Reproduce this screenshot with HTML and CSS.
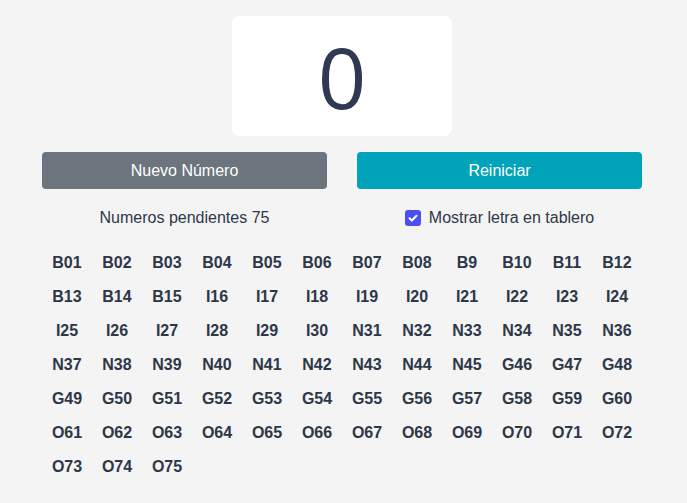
FILE: index.html
```html
<!DOCTYPE html>
<html lang="es">
<head>
<meta charset="utf-8">
<title>Bingo</title>
<link rel="stylesheet" href="styles.css">
</head>
<body>
<div class="app">
  <div class="display"><span class="current">0</span></div>
  <div class="controls">
    <div class="col">
      <button class="btn btn-gray">Nuevo Número</button>
      <div class="info">Numeros pendientes 75</div>
    </div>
    <div class="col">
      <button class="btn btn-teal">Reiniciar</button>
      <label class="info check">
        <span class="box"><svg viewBox="0 0 16 16" width="16" height="16"><path d="M4.5 8.2l2.3 2.3 4.7-4.8" fill="none" stroke="#fff" stroke-width="2" stroke-linecap="round" stroke-linejoin="round"/></svg></span>
        Mostrar letra en tablero
      </label>
    </div>
  </div>
  <div class="board">
    <span>B01</span><span>B02</span><span>B03</span><span>B04</span><span>B05</span><span>B06</span><span>B07</span><span>B08</span><span>B9</span><span>B10</span><span>B11</span><span>B12</span>
    <span>B13</span><span>B14</span><span>B15</span><span>I16</span><span>I17</span><span>I18</span><span>I19</span><span>I20</span><span>I21</span><span>I22</span><span>I23</span><span>I24</span>
    <span>I25</span><span>I26</span><span>I27</span><span>I28</span><span>I29</span><span>I30</span><span>N31</span><span>N32</span><span>N33</span><span>N34</span><span>N35</span><span>N36</span>
    <span>N37</span><span>N38</span><span>N39</span><span>N40</span><span>N41</span><span>N42</span><span>N43</span><span>N44</span><span>N45</span><span>G46</span><span>G47</span><span>G48</span>
    <span>G49</span><span>G50</span><span>G51</span><span>G52</span><span>G53</span><span>G54</span><span>G55</span><span>G56</span><span>G57</span><span>G58</span><span>G59</span><span>G60</span>
    <span>O61</span><span>O62</span><span>O63</span><span>O64</span><span>O65</span><span>O66</span><span>O67</span><span>O68</span><span>O69</span><span>O70</span><span>O71</span><span>O72</span>
    <span>O73</span><span>O74</span><span>O75</span>
  </div>
</div>
</body>
</html>
```
FILE: styles.css
```css
html, body {
  margin: 0;
  padding: 0;
  background: #f4f4f4;
}
body {
  font-family: "Liberation Sans", Arial, sans-serif;
  color: #2d3748;
  padding-right: 3px;
}
.app {
  width: 600px;
  margin: 0 auto;
  padding-top: 16px;
}
.display {
  width: 220px;
  height: 120px;
  margin: 0 auto;
  background: #fff;
  border-radius: 8px;
  display: flex;
  align-items: center;
  justify-content: center;
}
.current {
  font-family: "Open Sans", sans-serif;
  font-size: 85px;
  line-height: 1;
  color: #2d3a52;
}
.controls {
  margin-top: 16px;
  display: grid;
  grid-template-columns: 1fr 1fr;
  column-gap: 30px;
}
.col {
  display: flex;
  flex-direction: column;
  align-items: center;
}
.btn {
  width: 100%;
  height: 37px;
  border: none;
  border-radius: 4px;
  color: #fff;
  font-family: "Liberation Sans", Arial, sans-serif;
  font-size: 16px;
  padding: 0;
}
.btn-gray { background: #6c757d; }
.btn-teal { background: #00a3b9; }
.info {
  margin-top: 17px;
  font-size: 16px;
  line-height: 24px;
  display: flex;
  align-items: center;
}
.box {
  width: 16px;
  height: 16px;
  border-radius: 3px;
  background: #4b4ff0;
  display: inline-flex;
  margin-right: 8px;
}
.board {
  margin-top: 16px;
  display: grid;
  grid-template-columns: repeat(12, 50px);
  grid-auto-rows: 34px;
  font-weight: bold;
  font-size: 16px;
}
.board span {
  display: flex;
  align-items: center;
  justify-content: center;
}
```
